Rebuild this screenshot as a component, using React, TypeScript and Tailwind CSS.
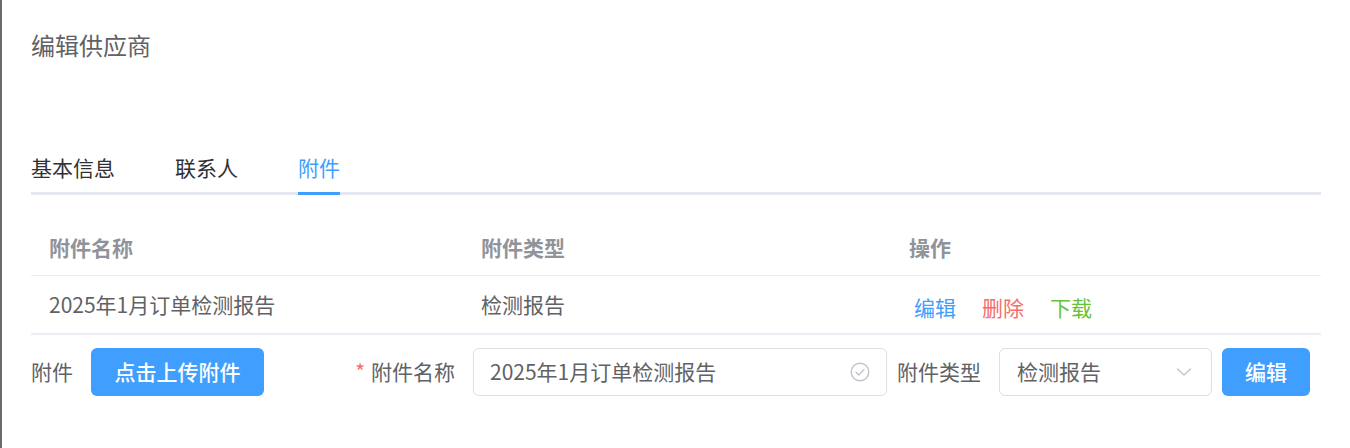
import React from "react";

const font = { fontFamily: '"Noto Sans CJK SC", "Noto Sans", sans-serif' };

const tabs = ["基本信息", "联系人", "附件"];

function CheckCircle() {
  return (
    <svg width="20" height="20" viewBox="0 0 20 20" fill="none" stroke="#c0c4cc" strokeWidth="1.4">
      <circle cx="10" cy="10" r="8.8" />
      <polyline points="6,10.2 8.8,13 14,7.6" strokeLinecap="round" strokeLinejoin="round" />
    </svg>
  );
}

function Chevron() {
  return (
    <svg width="16" height="10" viewBox="0 0 16 10" fill="none" stroke="#c0c4cc" strokeWidth="1.4">
      <polyline points="1.5,2 8,8 14.5,2" strokeLinecap="round" strokeLinejoin="round" />
    </svg>
  );
}

export default function App() {
  return (
    <div
      className="h-[448px] w-[1350px] bg-white border-l-2 border-[#6b6b6b] pl-[29px] pr-[29px] overflow-hidden"
      style={font}
    >
      {/* 标题 */}
      <div className="pt-[33px] text-[24px] leading-[24px] text-[#606266]">编辑供应商</div>

      {/* 标签页 */}
      <div className="mt-[100px] flex border-b-[3px] border-[#e4e7ed]">
        {tabs.map((t, i) => (
          <div
            key={t}
            className={
              "-mb-[3px] border-b-[3px] pb-[14px] text-[21px] leading-[21px] " +
              (i === 2
                ? "border-[#409eff] text-[#409eff]"
                : "border-transparent text-[#303133] mr-[60px]")
            }
          >
            {t}
          </div>
        ))}
      </div>

      {/* 表格 */}
      <div className="mt-[25px] text-[21px]">
        <div className="grid grid-cols-[430px_430px_430px] h-[56px] items-center border-b border-[#ebeef5] font-bold text-[#909399]">
          <div className="pl-[18px]">附件名称</div>
          <div className="pl-[20px]">附件类型</div>
          <div className="pl-[18px]">操作</div>
        </div>
        <div className="grid grid-cols-[430px_430px_430px] h-[59px] items-center border-b-2 border-[#ebeef5] text-[#606266]">
          <div className="pl-[18px]">2025年1月订单检测报告</div>
          <div className="pl-[20px]">检测报告</div>
          <div className="pl-[23px] pt-[6px] flex gap-[26px]">
            <span className="text-[#409eff]">编辑</span>
            <span className="text-[#f56c6c]">删除</span>
            <span className="text-[#67c23a]">下载</span>
          </div>
        </div>
      </div>

      {/* 表单 */}
      <div className="mt-[13px] flex items-center h-[48px] text-[21px] text-[#606266]">
        <span className="pr-[18px]">附件</span>
        <button className="w-[173px] h-[48px] rounded-[6px] bg-[#409eff] text-white font-medium">
          点击上传附件
        </button>
        <div className="w-[209px] pr-[18px] text-right">
          <span className="text-[#f56c6c] mr-[6px]">*</span>附件名称
        </div>
        <div className="w-[414px] h-[48px] rounded-[6px] border border-[#dcdfe6] flex items-center pl-[16px] pr-[16px] justify-between">
          <span>2025年1月订单检测报告</span>
          <CheckCircle />
        </div>
        <span className="ml-[10px] pr-[18px]">附件类型</span>
        <div className="w-[213px] h-[48px] rounded-[6px] border border-[#dcdfe6] flex items-center pl-[17px] pr-[19px] justify-between">
          <span>检测报告</span>
          <Chevron />
        </div>
        <button className="ml-[10px] w-[88px] h-[48px] rounded-[6px] bg-[#409eff] text-white font-medium">
          编辑
        </button>
      </div>
    </div>
  );
}
